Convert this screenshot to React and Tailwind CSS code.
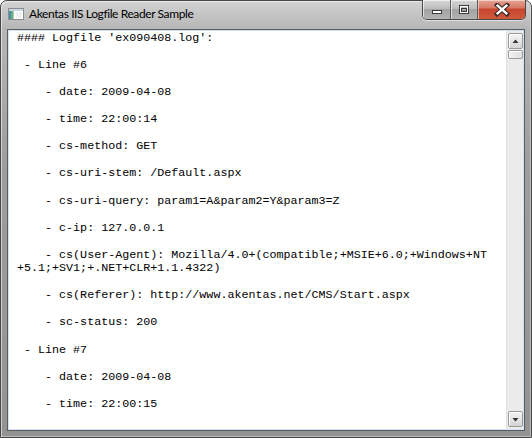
import React from "react";

const lines = [
  "#### Logfile 'ex090408.log':",
  "",
  " - Line #6",
  "",
  "    - date: 2009-04-08",
  "",
  "    - time: 22:00:14",
  "",
  "    - cs-method: GET",
  "",
  "    - cs-uri-stem: /Default.aspx",
  "",
  "    - cs-uri-query: param1=A&param2=Y&param3=Z",
  "",
  "    - c-ip: 127.0.0.1",
  "",
  "    - cs(User-Agent): Mozilla/4.0+(compatible;+MSIE+6.0;+Windows+NT",
  "+5.1;+SV1;+.NET+CLR+1.1.4322)",
  "",
  "    - cs(Referer): http://www.akentas.net/CMS/Start.aspx",
  "",
  "    - sc-status: 200",
  "",
  " - Line #7",
  "",
  "    - date: 2009-04-08",
  "",
  "    - time: 22:00:15",
];

function AppIcon() {
  return (
    <svg width="16" height="16" viewBox="0 0 16 16" className="shrink-0">
      <rect x="0.5" y="2.5" width="15" height="11" fill="#ffffff" stroke="#8c8c8c" />
      <rect x="1" y="3" width="14" height="2" fill="#c9d6e3" />
      <rect x="1" y="5" width="2" height="8" fill="#3f8fb0" />
      <rect x="3" y="5" width="2" height="8" fill="#6fb36a" />
      <rect x="5" y="5" width="1" height="8" fill="#a9c9d9" />
      <rect x="8" y="6" width="6" height="6" fill="#eef2f6" />
    </svg>
  );
}

function CaptionButtons() {
  return (
    <div className="flex h-[20px] mt-[-1px] rounded-b-[5px] border border-t-0 border-[#4a4a4a] overflow-hidden shadow-[0_1px_0_rgba(255,255,255,0.5)]">
      <div className="w-[28px] h-full flex items-center justify-center border-r border-[#5a5a5a] bg-[linear-gradient(180deg,#d6d6d6_0%,#bdbdbd_45%,#a3a3a3_50%,#b3b3b3_100%)] shadow-[inset_1px_1px_0_rgba(255,255,255,0.6)]">
        <svg width="14" height="12" viewBox="0 0 14 12">
          <rect x="2.5" y="6.5" width="9" height="3" fill="#ffffff" stroke="#3a3a3a" />
        </svg>
      </div>
      <div className="w-[27px] h-full flex items-center justify-center border-r border-[#5a5a5a] bg-[linear-gradient(180deg,#d6d6d6_0%,#bdbdbd_45%,#a3a3a3_50%,#b3b3b3_100%)] shadow-[inset_1px_1px_0_rgba(255,255,255,0.6)]">
        <svg width="14" height="12" viewBox="0 0 14 12">
          <rect x="2.5" y="1.5" width="9" height="8" fill="none" stroke="#3a3a3a" />
          <rect x="3.5" y="2.5" width="7" height="6" fill="none" stroke="#ffffff" />
          <rect x="4.5" y="4.5" width="5" height="3" fill="none" stroke="#3a3a3a" />
        </svg>
      </div>
      <div className="w-[47px] h-full flex items-center justify-center bg-[linear-gradient(180deg,#e6a393_0%,#d77a66_40%,#c7452d_50%,#d05a3c_100%)] shadow-[inset_1px_1px_0_rgba(255,255,255,0.5)]">
        <svg width="16" height="14" viewBox="0 0 16 14">
          <path d="M3 2 L13 11 M13 2 L3 11" stroke="#3a2a2a" strokeWidth="4.4" strokeLinecap="square" />
          <path d="M3.6 2.6 L12.4 10.4 M12.4 2.6 L3.6 10.4" stroke="#ffffff" strokeWidth="2.4" strokeLinecap="square" />
        </svg>
      </div>
    </div>
  );
}

function ScrollButton({ up }) {
  return (
    <div className="w-[15px] h-[16px] mx-auto rounded-[2px] border border-[#9a9a9a] bg-[linear-gradient(180deg,#f4f4f4_0%,#e6e6e6_50%,#d4d4d4_100%)] flex items-center justify-center shadow-[inset_1px_1px_0_#ffffff]">
      <svg width="7" height="5" viewBox="0 0 7 5">
        {up ? (
          <polygon points="3.5,0.5 6.5,4 0.5,4" fill="#333333" />
        ) : (
          <polygon points="0.5,1 6.5,1 3.5,4.5" fill="#333333" />
        )}
      </svg>
    </div>
  );
}

export default function App() {
  return (
    <div className="w-[532px] h-[438px] bg-white overflow-hidden">
      <div className="w-full h-full flex flex-col rounded-t-[7px] border border-[#474747] bg-[linear-gradient(180deg,#d2d2d2_0px,#b6b6b6_28px,#9e9e9e_160px,#939393_100%)] shadow-[inset_1px_1px_0_rgba(255,255,255,0.55),inset_-1px_-1px_0_rgba(255,255,255,0.35)]">
        <div className="h-[28px] flex items-start shrink-0">
          <div className="flex items-center h-[26px] pl-[7px] gap-[5px]">
            <AppIcon />
            <span className="text-[12px] leading-none tracking-[-0.4px] text-black whitespace-nowrap" style={{ fontFamily: '"Segoe UI", Lato, sans-serif' }}>
              Akentas IIS Logfile Reader Sample
            </span>
          </div>
          <div className="ml-auto mr-[5px]">
            <CaptionButtons />
          </div>
        </div>
        <div className="flex-1 mx-[6px] mb-[6px] border border-[#5c5c5c] min-h-0 flex">
          <div className="flex-1 min-h-0 flex border border-[#cfe1f4] bg-white">
            <div className="flex-1 min-w-0 overflow-hidden pl-[8px] pt-[1px]">
              <pre
                className="m-0 text-black text-[11.7px] leading-[13.55px] whitespace-pre"
                style={{ fontFamily: '"Liberation Mono", "Courier New", monospace' }}
              >
                {lines.join("\n")}
              </pre>
            </div>
            <div className="w-[17px] shrink-0 bg-[#ebebeb] flex flex-col py-[2px] border-l border-[#e2e2e2]">
              <ScrollButton up />
              <div className="w-[15px] h-[9px] mx-auto mt-[1px] rounded-[2px] border border-[#9a9a9a] bg-[linear-gradient(90deg,#f0f0f0,#dedede)] shadow-[inset_1px_1px_0_#ffffff]" />
              <div className="flex-1" />
              <ScrollButton />
            </div>
          </div>
        </div>
      </div>
    </div>
  );
}
